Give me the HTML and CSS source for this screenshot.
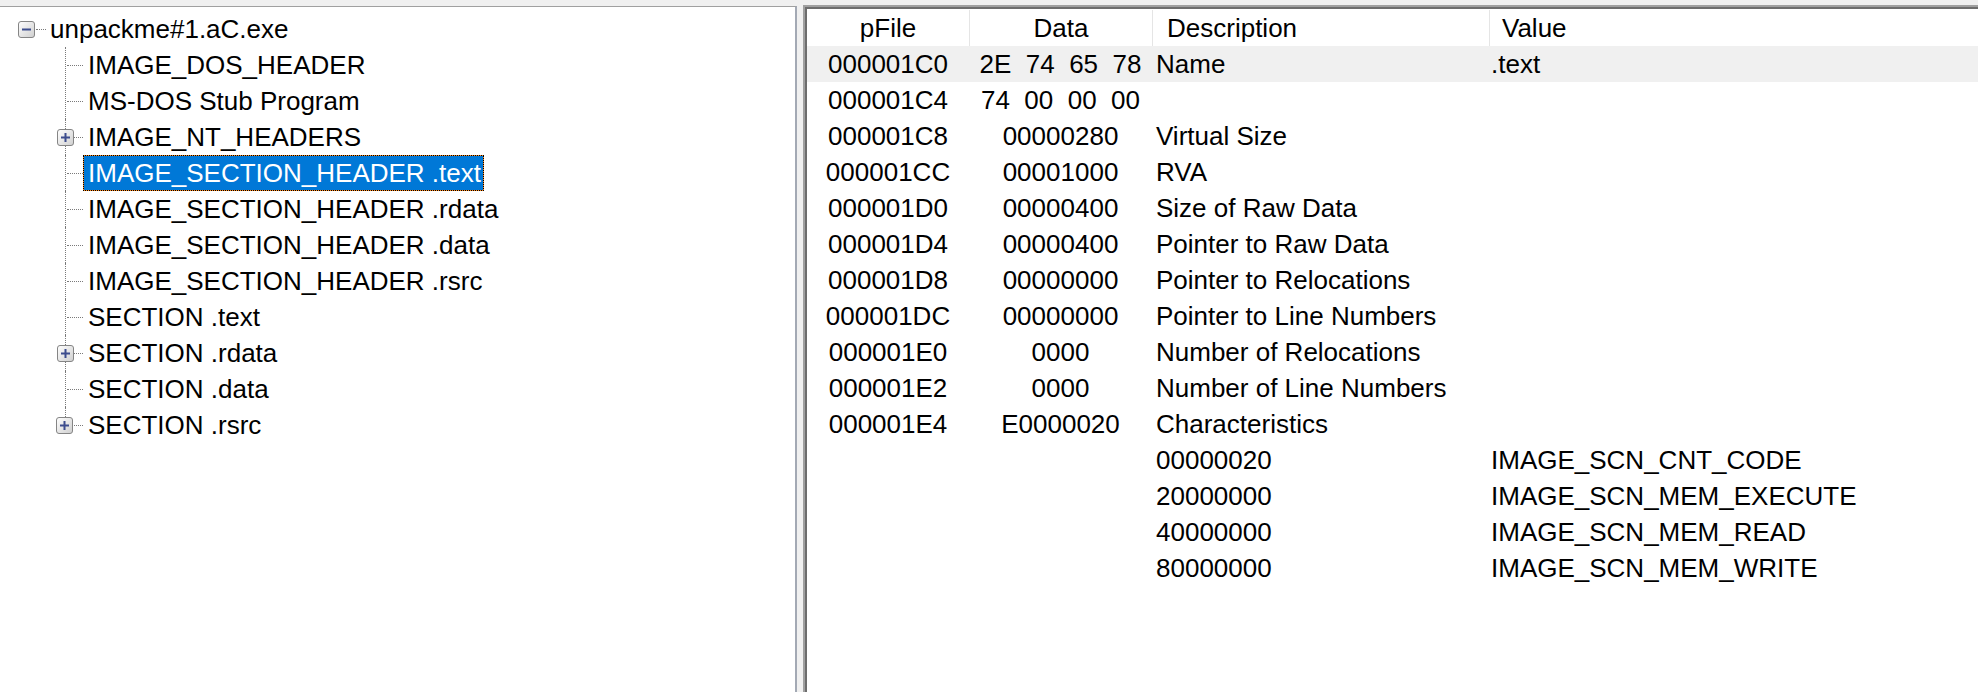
FILE: index.html
```html
<!DOCTYPE html>
<html>
<head>
<meta charset="utf-8">
<title>PE view</title>
<link rel="stylesheet" href="styles.css">
</head>
<body>
<div class="window">
  <div class="tree-pane">
    <div class="tree">
      <div class="root-row">
        <span class="root-indent"></span>
        <svg class="toggle" width="17" height="17" viewBox="0 0 17 17"><defs><linearGradient id="tg" x1="0" y1="0" x2="1" y2="1"><stop offset="0" stop-color="#ffffff"/><stop offset="1" stop-color="#cfcfcf"/></linearGradient></defs><rect x="0.5" y="0.5" width="16" height="16" rx="2.5" fill="url(#tg)" stroke="#858585"/><rect x="4" y="7.5" width="9" height="2" fill="#3d4d8d"/></svg>
        <span class="root-conn"></span>
        <span class="label">unpackme#1.aC.exe</span>
      </div>
      <div class="children">
        <div class="item"><span class="indent"></span><span class="guide"><span class="hline"></span></span><span class="label">IMAGE_DOS_HEADER</span></div>
        <div class="item"><span class="indent"></span><span class="guide"><span class="hline"></span></span><span class="label">MS-DOS Stub Program</span></div>
        <div class="item"><span class="indent"></span><span class="guide"><span class="hline"></span><svg class="plus" width="17" height="17" viewBox="0 0 17 17"><defs><linearGradient id="pg1" x1="0" y1="0" x2="1" y2="1"><stop offset="0" stop-color="#ffffff"/><stop offset="1" stop-color="#cfcfcf"/></linearGradient></defs><rect x="0.5" y="0.5" width="16" height="16" rx="2.5" fill="url(#pg1)" stroke="#858585"/><rect x="4" y="7.5" width="9" height="2" fill="#3d4d8d"/><rect x="7.5" y="4" width="2" height="9" fill="#3d4d8d"/></svg></span><span class="label">IMAGE_NT_HEADERS</span></div>
        <div class="item"><span class="indent"></span><span class="guide"><span class="hline"></span></span><span class="label selected">IMAGE_SECTION_HEADER .text</span></div>
        <div class="item"><span class="indent"></span><span class="guide"><span class="hline"></span></span><span class="label">IMAGE_SECTION_HEADER .rdata</span></div>
        <div class="item"><span class="indent"></span><span class="guide"><span class="hline"></span></span><span class="label">IMAGE_SECTION_HEADER .data</span></div>
        <div class="item"><span class="indent"></span><span class="guide"><span class="hline"></span></span><span class="label">IMAGE_SECTION_HEADER .rsrc</span></div>
        <div class="item"><span class="indent"></span><span class="guide"><span class="hline"></span></span><span class="label">SECTION .text</span></div>
        <div class="item"><span class="indent"></span><span class="guide"><span class="hline"></span><svg class="plus" width="17" height="17" viewBox="0 0 17 17"><defs><linearGradient id="pg2" x1="0" y1="0" x2="1" y2="1"><stop offset="0" stop-color="#ffffff"/><stop offset="1" stop-color="#cfcfcf"/></linearGradient></defs><rect x="0.5" y="0.5" width="16" height="16" rx="2.5" fill="url(#pg2)" stroke="#858585"/><rect x="4" y="7.5" width="9" height="2" fill="#3d4d8d"/><rect x="7.5" y="4" width="2" height="9" fill="#3d4d8d"/></svg></span><span class="label">SECTION .rdata</span></div>
        <div class="item"><span class="indent"></span><span class="guide"><span class="hline"></span></span><span class="label">SECTION .data</span></div>
        <div class="item last"><span class="indent"></span><span class="guide"><span class="hline"></span><svg class="plus" width="17" height="17" viewBox="0 0 17 17"><defs><linearGradient id="pg3" x1="0" y1="0" x2="1" y2="1"><stop offset="0" stop-color="#ffffff"/><stop offset="1" stop-color="#cfcfcf"/></linearGradient></defs><rect x="0.5" y="0.5" width="16" height="16" rx="2.5" fill="url(#pg3)" stroke="#858585"/><rect x="4" y="7.5" width="9" height="2" fill="#3d4d8d"/><rect x="7.5" y="4" width="2" height="9" fill="#3d4d8d"/></svg></span><span class="label">SECTION .rsrc</span></div>
      </div>
    </div>
  </div>
  <div class="list-pane">
    <div class="header">
      <div class="hcell center">pFile</div>
      <div class="hcell center sep">Data</div>
      <div class="hcell sep pad-desc">Description</div>
      <div class="hcell sep pad-val">Value</div>
    </div>
    <div class="row hl"><div class="c center">000001C0</div><div class="c center pre">2E  74  65  78</div><div class="c desc">Name</div><div class="c val">.text</div></div>
    <div class="row"><div class="c center">000001C4</div><div class="c center pre">74  00  00  00</div><div class="c desc"></div><div class="c val"></div></div>
    <div class="row"><div class="c center">000001C8</div><div class="c center">00000280</div><div class="c desc">Virtual Size</div><div class="c val"></div></div>
    <div class="row"><div class="c center">000001CC</div><div class="c center">00001000</div><div class="c desc">RVA</div><div class="c val"></div></div>
    <div class="row"><div class="c center">000001D0</div><div class="c center">00000400</div><div class="c desc">Size of Raw Data</div><div class="c val"></div></div>
    <div class="row"><div class="c center">000001D4</div><div class="c center">00000400</div><div class="c desc">Pointer to Raw Data</div><div class="c val"></div></div>
    <div class="row"><div class="c center">000001D8</div><div class="c center">00000000</div><div class="c desc">Pointer to Relocations</div><div class="c val"></div></div>
    <div class="row"><div class="c center">000001DC</div><div class="c center">00000000</div><div class="c desc">Pointer to Line Numbers</div><div class="c val"></div></div>
    <div class="row"><div class="c center">000001E0</div><div class="c center">0000</div><div class="c desc">Number of Relocations</div><div class="c val"></div></div>
    <div class="row"><div class="c center">000001E2</div><div class="c center">0000</div><div class="c desc">Number of Line Numbers</div><div class="c val"></div></div>
    <div class="row"><div class="c center">000001E4</div><div class="c center">E0000020</div><div class="c desc">Characteristics</div><div class="c val"></div></div>
    <div class="row"><div class="c center"></div><div class="c center"></div><div class="c desc">00000020</div><div class="c val">IMAGE_SCN_CNT_CODE</div></div>
    <div class="row"><div class="c center"></div><div class="c center"></div><div class="c desc">20000000</div><div class="c val">IMAGE_SCN_MEM_EXECUTE</div></div>
    <div class="row"><div class="c center"></div><div class="c center"></div><div class="c desc">40000000</div><div class="c val">IMAGE_SCN_MEM_READ</div></div>
    <div class="row"><div class="c center"></div><div class="c center"></div><div class="c desc">80000000</div><div class="c val">IMAGE_SCN_MEM_WRITE</div></div>
  </div>
</div>
</body>
</html>
```
FILE: styles.css
```css
html, body {
  margin: 0;
  padding: 0;
  background: #f0f0f0;
}
body {
  font-family: "Liberation Sans", Arial, sans-serif;
  font-size: 26px;
  color: #000;
  overflow: hidden;
}
.window {
  display: flex;
  align-items: stretch;
  height: 692px;
  width: 1978px;
}
.tree-pane {
  margin-top: 6px;
  width: 795px;
  flex: none;
  background: #fff;
  border-top: 1px solid #a0a0a0;
  border-right: 2px solid #a3a9b4;
}
.tree {
  padding-top: 4px;
}
.root-row, .item {
  display: flex;
  align-items: center;
  height: 36px;
  line-height: 36px;
  white-space: nowrap;
}
.root-indent {
  width: 18px;
  flex: none;
}
.toggle {
  flex: none;
  display: block;
}
.root-conn {
  width: 10px;
  flex: none;
  align-self: center;
  border-top: 1px dotted #7a7a7a;
  margin-left: 1px;
  margin-right: -1px;
}
.label {
  border: 1px solid transparent;
  padding: 0 2px 0 4px;
  height: 34px;
  line-height: 34px;
}
.label.selected {
  color: #fff;
  border: 1px dotted #000;
  background: linear-gradient(#0078d7, #0078d7) padding-box, linear-gradient(#ff8a1c, #ff8a1c) border-box;
}
.indent {
  width: 65px;
  flex: none;
}
.guide {
  position: relative;
  width: 18px;
  height: 36px;
  flex: none;
  border-left: 1px dotted #7a7a7a;
  box-sizing: border-box;
}
.item.last .guide {
  border-left: none;
}
.item.last .guide::before {
  content: "";
  position: absolute;
  left: 0;
  top: 0;
  height: 18px;
  border-left: 1px dotted #7a7a7a;
}
.hline {
  position: absolute;
  left: 1px;
  right: 0;
  top: 18px;
  border-top: 1px dotted #7a7a7a;
}
.plus {
  position: absolute;
  left: -9px;
  top: 10px;
  display: block;
}
.list-pane {
  margin-top: 5px;
  margin-left: 6px;
  flex: 1;
  background: #fff;
  border-top: 2px solid #a0a0a0;
  border-left: 2px solid #a0a0a0;
  box-shadow: inset 2px 2px 0 #6d6d6d;
  padding-top: 3px;
  padding-left: 2px;
  min-width: 0;
}
.header, .row {
  display: grid;
  grid-template-columns: 162px 183px 337px 1fr;
  height: 36px;
  line-height: 36px;
  white-space: nowrap;
}
.hcell.sep {
  border-left: 1px solid #e5e5e5;
}
.center {
  text-align: center;
}
.pad-desc {
  padding-left: 14px;
}
.pad-val {
  padding-left: 12px;
}
.row.hl {
  background: #f0f0f0;
}
.pre {
  white-space: pre;
}
.desc {
  padding-left: 4px;
}
.val {
  padding-left: 2px;
}
```
